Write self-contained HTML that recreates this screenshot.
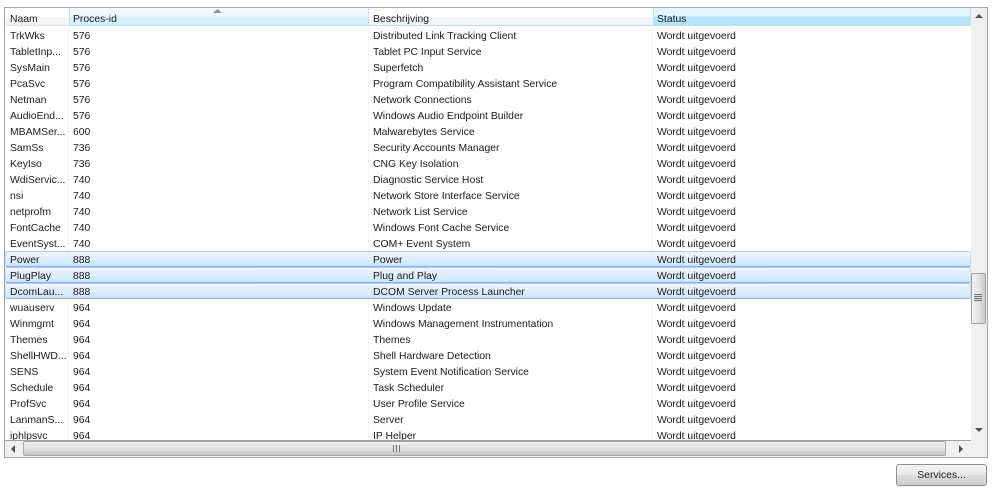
<!DOCTYPE html>
<html><head><meta charset="utf-8"><style>
html,body{margin:0;padding:0;background:#fff}
#p{position:relative;width:1000px;height:492px;overflow:hidden;background:#fff;font-family:"Liberation Sans",sans-serif;font-size:10.4px;color:#1c1c1c}
#p div{position:absolute}
.v{top:27px;width:1px;height:413px;background:#f1f5fa}
.s{left:5px;width:966px;height:16px;box-sizing:border-box;background:linear-gradient(#eef6ff,#cfe5fc);border-top:1px solid #b5cfee;border-bottom:1px solid #85ade0;border-left:1px solid #c5d9f0;border-right:1px solid #c5d9f0;border-radius:2px}
.h{top:13px;white-space:nowrap;line-height:13px}
.hd{top:8px;width:1px;height:18px;background:#bfe4f4}
.r{width:975px;height:18px;overflow:hidden;left:-5px}
.r span{position:absolute;top:1px;line-height:16px;white-space:nowrap}
.a{left:10px}.b{left:73px}.c{left:373px}.d{left:657px}
</style></head><body><div id="p">
<div style="left:4px;top:7px;width:984px;height:451px;box-sizing:border-box;border:1px solid #a5a5a5;background:#fff"></div>
<div style="left:5px;top:8px;width:966px;height:18px;background:linear-gradient(#fff 0,#fff 50%,#f4f5f7 51%,#f1f2f4 100%)"></div>
<div style="left:69px;top:8px;width:299px;height:18px;background:linear-gradient(#f4fbfe 0,#eef9fe 45%,#d8f0fb 50%,#d4eef9 100%)"></div>
<div style="left:653px;top:8px;width:317px;height:18px;background:linear-gradient(#e3f6fe 0,#e0f5fe 45%,#b7e6fa 50%,#b4e3f9 100%)"></div>
<div style="left:5px;top:25px;width:966px;height:1px;background:#e4e8ec"></div>
<div style="left:69px;top:25px;width:901px;height:1px;background:#b9e0f2"></div>
<div class="hd" style="left:69px"></div>
<div class="hd" style="left:368px"></div>
<div class="hd" style="left:653px"></div>
<div class="hd" style="left:970px"></div>
<svg style="position:absolute;left:212px;top:8px" width="11" height="6"><path d="M1 5L5.5 1L10 5Z" fill="#7d94a8"/></svg>
<div class="h a">Naam</div><div class="h b">Proces-id</div><div class="h c">Beschrijving</div><div class="h d">Status</div>
<div class="v" style="left:68px"></div><div class="v" style="left:368px"></div><div class="v" style="left:652px"></div>
<div class="s" style="top:251px"></div><div class="s" style="top:267px"></div><div class="s" style="top:283px"></div>
<div style="left:5px;top:27px;width:966px;height:413px;overflow:hidden">
<div class="r" style="top:1px"><span class="a">TrkWks</span><span class="b">576</span><span class="c">Distributed Link Tracking Client</span><span class="d">Wordt uitgevoerd</span></div>
<div class="r" style="top:17px"><span class="a">TabletInp...</span><span class="b">576</span><span class="c">Tablet PC Input Service</span><span class="d">Wordt uitgevoerd</span></div>
<div class="r" style="top:33px"><span class="a">SysMain</span><span class="b">576</span><span class="c">Superfetch</span><span class="d">Wordt uitgevoerd</span></div>
<div class="r" style="top:49px"><span class="a">PcaSvc</span><span class="b">576</span><span class="c">Program Compatibility Assistant Service</span><span class="d">Wordt uitgevoerd</span></div>
<div class="r" style="top:65px"><span class="a">Netman</span><span class="b">576</span><span class="c">Network Connections</span><span class="d">Wordt uitgevoerd</span></div>
<div class="r" style="top:81px"><span class="a">AudioEnd...</span><span class="b">576</span><span class="c">Windows Audio Endpoint Builder</span><span class="d">Wordt uitgevoerd</span></div>
<div class="r" style="top:97px"><span class="a">MBAMSer...</span><span class="b">600</span><span class="c">Malwarebytes Service</span><span class="d">Wordt uitgevoerd</span></div>
<div class="r" style="top:113px"><span class="a">SamSs</span><span class="b">736</span><span class="c">Security Accounts Manager</span><span class="d">Wordt uitgevoerd</span></div>
<div class="r" style="top:129px"><span class="a">KeyIso</span><span class="b">736</span><span class="c">CNG Key Isolation</span><span class="d">Wordt uitgevoerd</span></div>
<div class="r" style="top:145px"><span class="a">WdiServic...</span><span class="b">740</span><span class="c">Diagnostic Service Host</span><span class="d">Wordt uitgevoerd</span></div>
<div class="r" style="top:161px"><span class="a">nsi</span><span class="b">740</span><span class="c">Network Store Interface Service</span><span class="d">Wordt uitgevoerd</span></div>
<div class="r" style="top:177px"><span class="a">netprofm</span><span class="b">740</span><span class="c">Network List Service</span><span class="d">Wordt uitgevoerd</span></div>
<div class="r" style="top:193px"><span class="a">FontCache</span><span class="b">740</span><span class="c">Windows Font Cache Service</span><span class="d">Wordt uitgevoerd</span></div>
<div class="r" style="top:209px"><span class="a">EventSyst...</span><span class="b">740</span><span class="c">COM+ Event System</span><span class="d">Wordt uitgevoerd</span></div>
<div class="r" style="top:225px"><span class="a">Power</span><span class="b">888</span><span class="c">Power</span><span class="d">Wordt uitgevoerd</span></div>
<div class="r" style="top:241px"><span class="a">PlugPlay</span><span class="b">888</span><span class="c">Plug and Play</span><span class="d">Wordt uitgevoerd</span></div>
<div class="r" style="top:257px"><span class="a">DcomLau...</span><span class="b">888</span><span class="c">DCOM Server Process Launcher</span><span class="d">Wordt uitgevoerd</span></div>
<div class="r" style="top:273px"><span class="a">wuauserv</span><span class="b">964</span><span class="c">Windows Update</span><span class="d">Wordt uitgevoerd</span></div>
<div class="r" style="top:289px"><span class="a">Winmgmt</span><span class="b">964</span><span class="c">Windows Management Instrumentation</span><span class="d">Wordt uitgevoerd</span></div>
<div class="r" style="top:305px"><span class="a">Themes</span><span class="b">964</span><span class="c">Themes</span><span class="d">Wordt uitgevoerd</span></div>
<div class="r" style="top:321px"><span class="a">ShellHWD...</span><span class="b">964</span><span class="c">Shell Hardware Detection</span><span class="d">Wordt uitgevoerd</span></div>
<div class="r" style="top:337px"><span class="a">SENS</span><span class="b">964</span><span class="c">System Event Notification Service</span><span class="d">Wordt uitgevoerd</span></div>
<div class="r" style="top:353px"><span class="a">Schedule</span><span class="b">964</span><span class="c">Task Scheduler</span><span class="d">Wordt uitgevoerd</span></div>
<div class="r" style="top:369px"><span class="a">ProfSvc</span><span class="b">964</span><span class="c">User Profile Service</span><span class="d">Wordt uitgevoerd</span></div>
<div class="r" style="top:385px"><span class="a">LanmanS...</span><span class="b">964</span><span class="c">Server</span><span class="d">Wordt uitgevoerd</span></div>
<div class="r" style="top:401px"><span class="a">iphlpsvc</span><span class="b">964</span><span class="c">IP Helper</span><span class="d">Wordt uitgevoerd</span></div>
</div>
<!-- vertical scrollbar -->
<div style="left:971px;top:8px;width:16px;height:432px;background:#f0f0f0"></div>
<svg style="position:absolute;left:974px;top:13px" width="10" height="6"><path d="M1 5L5 1L9 5Z" fill="#505050"/></svg>
<svg style="position:absolute;left:974px;top:427px" width="10" height="6"><path d="M1 1L5 5L9 1Z" fill="#505050"/></svg>
<div style="left:971px;top:273px;width:15px;height:51px;box-sizing:border-box;border:1px solid #a3a3a3;border-radius:2px;background:linear-gradient(90deg,#f0f0f0,#e4e4e4 50%,#cbcbcb)"></div>
<div style="left:974px;top:294px;width:8px;height:8px;background:repeating-linear-gradient(#777 0,#777 1px,#ddd 1px,#ddd 2px)"></div>
<!-- horizontal scrollbar -->
<div style="left:5px;top:440px;width:982px;height:17px;background:#f0f0f0"></div>
<div style="left:5px;top:440px;width:966px;height:1px;background:#a0a0a0"></div>
<svg style="position:absolute;left:10px;top:444px" width="6" height="10"><path d="M5 1L1 5L5 9Z" fill="#505050"/></svg>
<svg style="position:absolute;left:958px;top:444px" width="6" height="10"><path d="M1 1L5 5L1 9Z" fill="#505050"/></svg>
<div style="left:23px;top:441px;width:923px;height:15px;box-sizing:border-box;border:1px solid #a8a8a8;border-radius:2px;background:linear-gradient(#f0f0f0,#e2e2e2 50%,#c6c6c6)"></div>
<div style="left:393px;top:445px;width:8px;height:7px;background:repeating-linear-gradient(90deg,#777 0,#777 1px,#ddd 1px,#ddd 3px)"></div>
<!-- button -->
<div style="left:896px;top:464px;width:91px;height:22px;box-sizing:border-box;border:1px solid #8e8f8f;border-radius:3px;background:linear-gradient(#f2f2f2,#ebebeb 48%,#dddddd 50%,#cfcfcf);text-align:center;line-height:22px;color:#222">Services...</div>
</div></body></html>
